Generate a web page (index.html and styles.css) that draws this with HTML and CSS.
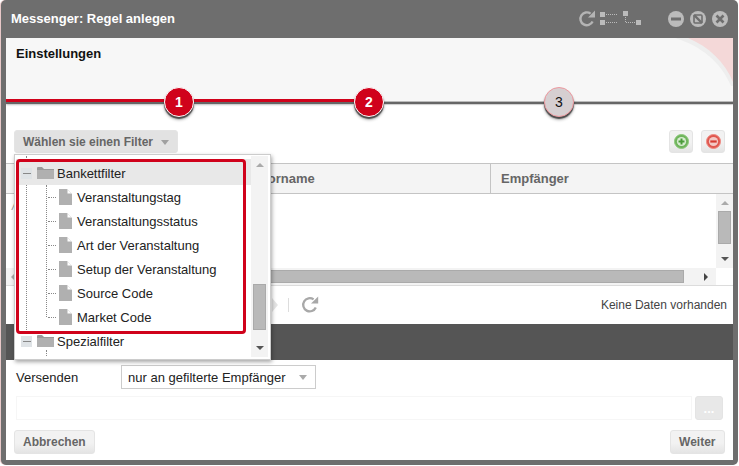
FILE: index.html
```html
<!DOCTYPE html>
<html lang="de">
<head>
<meta charset="utf-8">
<title>Messenger: Regel anlegen</title>
<link rel="stylesheet" href="styles.css">
</head>
<body>
<div class="window">
  <header class="titlebar">
    <span class="title">Messenger: Regel anlegen</span>
    <div class="tools">
      <svg class="ic-refresh" width="18" height="18" viewBox="0 0 18 18"><path d="M14.6 11.5A6.4 6.4 0 1 1 12.6 3.6" fill="none" stroke="#b4b4b4" stroke-width="2.4"/><path d="M10 7.4h7V.6z" fill="#b4b4b4"/></svg>
      <svg class="ic-tree" width="18" height="16" viewBox="0 0 18 16"><rect x="0" y="1" width="5" height="5" fill="#bbb"/><rect x="0" y="9" width="5" height="5" fill="#bbb"/><path d="M6 3.5h12M6 11.5h12" stroke="#bbb" stroke-dasharray="1 1"/></svg>
      <svg class="ic-tree2" width="18" height="16" viewBox="0 0 18 16"><rect x="0" y="0" width="5" height="5" fill="#bbb"/><rect x="13" y="9" width="5" height="5" fill="#bbb"/><path d="M2.5 6v6M3 11.5h10" stroke="#bbb" stroke-dasharray="1 1"/></svg>
    </div>
    <div class="winbtns">
      <svg width="16" height="16" viewBox="0 0 16 16"><circle cx="8" cy="8" r="8" fill="#bbb"/><rect x="3" y="6.5" width="10" height="3" fill="#6e6e6e"/></svg>
      <svg width="16" height="16" viewBox="0 0 16 16"><circle cx="8" cy="8" r="8" fill="#bbb"/><rect x="4" y="4" width="8" height="8" rx="1" fill="none" stroke="#6e6e6e" stroke-width="1.6"/><path d="M4 4l8 8" stroke="#6e6e6e" stroke-width="2.4"/></svg>
      <svg width="16" height="16" viewBox="0 0 16 16"><circle cx="8" cy="8" r="8" fill="#bbb"/><path d="M4.5 4.5l7 7M11.5 4.5l-7 7" stroke="#6e6e6e" stroke-width="2.6"/></svg>
    </div>
  </header>

  <main class="body">
    <section class="wizard">
      <h1 class="wizard-title">Einstellungen</h1>
      <div class="steps">
        <span class="seg seg-first seg-done"></span>
        <span class="step step-done">1</span>
        <span class="seg seg-mid seg-done"></span>
        <span class="step step-done">2</span>
        <span class="seg seg-mid seg-todo"></span>
        <span class="step step-todo">3</span>
        <span class="seg seg-last seg-todo"></span>
      </div>
    </section>

    <div class="toolbar">
      <button class="btn btn-filter" type="button">Wählen sie einen Filter<i class="caret"></i></button>
      <div class="toolbar-right">
        <button class="btn btn-icon" type="button"><svg width="15" height="15" viewBox="0 0 15 15"><circle cx="7.5" cy="7.5" r="7" fill="#6fb45c" stroke="#8cc87a"/><circle cx="7.5" cy="7.5" r="4.6" fill="#d8ecd2"/><path d="M7.5 4.5v6M4.5 7.5h6" stroke="#4b9b3a" stroke-width="2"/></svg></button>
        <button class="btn btn-icon" type="button"><svg width="15" height="15" viewBox="0 0 15 15"><circle cx="7.5" cy="7.5" r="7" fill="#e0584f" stroke="#ee8a82"/><circle cx="7.5" cy="7.5" r="4.6" fill="#f3c9c5"/><path d="M4.3 7.5h6.4" stroke="#d63c32" stroke-width="2.2"/></svg></button>
      </div>
    </div>

    <div class="grid">
      <div class="grid-head">
        <span class="col col-name">Vorname</span>
        <span class="col col-rcpt">Empfänger</span>
      </div>
      <div class="grid-main">
        <div class="grid-rows"><span class="grid-tick">/</span></div>
        <div class="vscroll">
          <i class="arrow arrow-up"></i>
          <i class="thumb vthumb"></i>
          <i class="arrow arrow-down"></i>
        </div>
      </div>
      <div class="hscroll">
        <div class="htrack">
          <i class="arrow arrow-left"></i>
          <i class="hthumb"></i>
          <i class="arrow arrow-right"></i>
        </div>
        <div class="hcorner"></div>
      </div>
      <div class="pager">
        <svg class="pager-next" width="8" height="16" viewBox="0 0 8 16"><path d="M1 1l6 7-6 7z" fill="#e4e4e4"/></svg>
        <i class="pager-sep"></i>
        <svg class="pager-refresh" width="18" height="18" viewBox="0 0 18 18"><path d="M14.8 11.5A6.6 6.6 0 1 1 12.6 3.4" fill="none" stroke="#a8a8a8" stroke-width="2.3"/><path d="M10 7.6h7.2V.6z" fill="#a8a8a8"/></svg>
        <span class="pager-info">Keine Daten vorhanden</span>
      </div>
    </div>

    <div class="band"></div>

    <div class="form-row">
      <label class="form-label">Versenden</label>
      <div class="select"><span>nur an gefilterte Empfänger</span><i class="caret caret-light"></i></div>
    </div>

    <div class="file-row">
      <div class="file-input"></div>
      <button class="btn-dots" type="button">...</button>
    </div>

    <footer class="actions">
      <button class="btn btn-action" type="button">Abbrechen</button>
      <button class="btn btn-action btn-next" type="button">Weiter</button>
    </footer>

    <svg class="corner" width="58" height="48" viewBox="0 0 58 48"><path d="M0 0C26 8 46 24 56 48H58V0z" fill="#eeeeee"/><path d="M13 0C34 9 50 24 58 44V0z" fill="#f4d8d8"/></svg>
  </main>

  <div class="popup">
    <div class="tree">
      <div class="tree-row tree-root tree-selected">
        <i class="expander"></i>
        <svg class="folder" width="17" height="12" viewBox="0 0 17 12"><path d="M0 3V1q0-1 1-1h4l2 2h10v1z" fill="#999"/><rect x="0" y="3" width="17" height="9" fill="#b0b0b0"/></svg>
        <span>Bankettfilter</span>
      </div>
      <div class="tree-children">
        <div class="tree-row tree-leaf"><i class="hdots"></i><svg class="file" width="13" height="16" viewBox="0 0 13 16"><path d="M0 0h8l5 5v11H0z" fill="#b0b0b0"/><path d="M8.5 0.5l4 4h-4z" fill="#fff"/></svg><span>Veranstaltungstag</span></div>
        <div class="tree-row tree-leaf"><i class="hdots"></i><svg class="file" width="13" height="16" viewBox="0 0 13 16"><path d="M0 0h8l5 5v11H0z" fill="#b0b0b0"/><path d="M8.5 0.5l4 4h-4z" fill="#fff"/></svg><span>Veranstaltungsstatus</span></div>
        <div class="tree-row tree-leaf"><i class="hdots"></i><svg class="file" width="13" height="16" viewBox="0 0 13 16"><path d="M0 0h8l5 5v11H0z" fill="#b0b0b0"/><path d="M8.5 0.5l4 4h-4z" fill="#fff"/></svg><span>Art der Veranstaltung</span></div>
        <div class="tree-row tree-leaf"><i class="hdots"></i><svg class="file" width="13" height="16" viewBox="0 0 13 16"><path d="M0 0h8l5 5v11H0z" fill="#b0b0b0"/><path d="M8.5 0.5l4 4h-4z" fill="#fff"/></svg><span>Setup der Veranstaltung</span></div>
        <div class="tree-row tree-leaf"><i class="hdots"></i><svg class="file" width="13" height="16" viewBox="0 0 13 16"><path d="M0 0h8l5 5v11H0z" fill="#b0b0b0"/><path d="M8.5 0.5l4 4h-4z" fill="#fff"/></svg><span>Source Code</span></div>
        <div class="tree-row tree-leaf"><i class="hdots"></i><svg class="file" width="13" height="16" viewBox="0 0 13 16"><path d="M0 0h8l5 5v11H0z" fill="#b0b0b0"/><path d="M8.5 0.5l4 4h-4z" fill="#fff"/></svg><span>Market Code</span></div>
      </div>
      <div class="tree-row tree-root">
        <i class="expander"></i>
        <svg class="folder" width="17" height="12" viewBox="0 0 17 12"><path d="M0 3V1q0-1 1-1h4l2 2h10v1z" fill="#999"/><rect x="0" y="3" width="17" height="9" fill="#b0b0b0"/></svg>
        <span>Spezialfilter</span>
      </div>
      <i class="tree-more"></i>
    </div>
    <div class="vscroll popup-scroll">
      <i class="arrow arrow-up"></i>
      <i class="thumb popup-thumb"></i>
      <i class="arrow arrow-down"></i>
    </div>
    <div class="highlight"></div>
  </div>
</div>
</body>
</html>
```

FILE: styles.css
```css
* { box-sizing: border-box; }
html, body { margin: 0; padding: 0; background: #fff; }
body {
  width: 739px;
  height: 466px;
  overflow: hidden;
  font-family: "Liberation Sans", Arial, sans-serif;
  font-size: 12px;
  color: #222;
}
button { font-family: inherit; padding: 0; margin: 0; cursor: default; }
i { display: block; }

.window {
  position: relative;
  width: 737px;
  height: 465px;
  margin-left: 1px;
  background: #6e6e6e;
  border-radius: 5px;
  padding: 0 5px 5px 5px;
  display: flex;
  flex-direction: column;
  box-shadow: -1px 0 0 #e8c8c8;
}

/* title bar */
.titlebar {
  height: 38px;
  flex: none;
  display: flex;
  align-items: center;
  padding-left: 5px;
}
.title { font-size: 13px; font-weight: bold; color: #fff; flex: 1; padding-bottom: 2px; }
.tools { display: flex; align-items: center; margin-right: 27px; }
.ic-refresh { margin-right: 4px; }
.ic-tree { margin-right: 5px; }
.ic-tree2 { margin-right: 0; }
.winbtns { display: flex; gap: 6px; margin-right: 5px; }

/* content */
.body {
  position: relative;
  flex: 1;
  background: #fff;
  display: flex;
  flex-direction: column;
  overflow: hidden;
}
.corner { position: absolute; top: 0; right: 0; }

.wizard {
  height: 80px;
  flex: none;
  background: linear-gradient(#f7f7f7 63px, #fff 63px);
  position: relative;
}
.wizard-title {
  margin: 0;
  padding: 8px 0 0 10px;
  font-size: 13px;
  line-height: 15px;
  font-weight: bold;
  color: #111;
}
.steps {
  position: absolute;
  left: 0;
  right: 0;
  top: 49px;
  display: flex;
  align-items: center;
  height: 30px;
}
.seg { display: block; position: relative; }
.seg-first { width: 158px; }
.seg-mid { width: 160px; }
.seg-last { flex: 1; }
.seg-done {
  height: 3px;
  top: -2px;
  background: #d0021b;
  box-shadow: 0 2px 0 #666, 0 3px 2px rgba(0,0,0,.25);
}
.seg-todo {
  height: 2px;
  top: 1px;
  background: #666;
  box-shadow: 0 -1px 0 #bbb, 0 1px 1px rgba(0,0,0,.2);
}
.step {
  width: 30px;
  height: 30px;
  flex: none;
  border-radius: 50%;
  display: flex;
  align-items: center;
  justify-content: center;
  position: relative;
  z-index: 1;
  font-size: 14px;
  box-shadow: 0 2px 1px rgba(0,0,0,.6), 0 3px 3px rgba(0,0,0,.3);
}
.step-done {
  background: #d0021b;
  border: 1px solid #fff;
  color: #fff;
  font-weight: bold;
}
.step-todo {
  background: #d6cfd1;
  border: 1px solid #ee9aa0;
  color: #111;
}

/* toolbar */
.toolbar {
  flex: none;
  display: flex;
  justify-content: space-between;
  padding: 12px 8px 0 8px;
  height: 45px;
}
.btn {
  height: 23px;
  border: 1px solid #e4e4e4;
  border-radius: 3px;
  background: linear-gradient(#f2f2f2, #f2f2f2 55%, #e4e4e4);
  font-size: 12px;
  font-weight: bold;
  color: #666;
}
.btn-filter {
  width: 164px;
  background: #e2e2e2;
  display: flex;
  align-items: center;
  padding-left: 8px;
}
.caret {
  width: 0;
  height: 0;
  margin-left: 8px;
  border-left: 4.5px solid transparent;
  border-right: 4.5px solid transparent;
  border-top: 5px solid #a0a0a0;
  margin-top: 1px;
}
.caret-light { border-top-color: #aaa; margin-left: 0; }
.toolbar-right { display: flex; gap: 8px; }
.btn-icon {
  width: 24px;
  display: flex;
  align-items: center;
  justify-content: center;
}

/* grid */
.grid { flex: none; }
.grid-head {
  height: 31px;
  background: #f4f4f4;
  border-top: 1px solid #c4c4c4;
  border-bottom: 1px solid #c4c4c4;
  display: flex;
  font-weight: bold;
  color: #666;
  font-size: 13px;
  line-height: 29px;
}
.col-name { width: 484px; padding-left: 254px; }
.col-rcpt { flex: 1; border-left: 1px solid #c4c4c4; padding-left: 10px; }
.grid-main { display: flex; height: 74px; }
.grid-rows { flex: 1; padding: 5px 0 0 6px; color: #999; line-height: 14px; font-style: italic; }
.grid-tick { display: block; }
.vscroll {
  width: 17px;
  flex: none;
  background: #f3f3f3;
  display: flex;
  flex-direction: column;
  align-items: center;
  position: relative;
}
.arrow { width: 0; height: 0; flex: none; }
.arrow-up {
  position: absolute; top: 7px;
  border-left: 4px solid transparent;
  border-right: 4px solid transparent;
  border-bottom: 4px solid #aaa;
}
.arrow-down {
  position: absolute; bottom: 7px;
  border-left: 4px solid transparent;
  border-right: 4px solid transparent;
  border-top: 4px solid #555;
}
.arrow-right {
  border-top: 4px solid transparent;
  border-bottom: 4px solid transparent;
  border-left: 4px solid #444;
  margin-left: 20px;
}
.arrow-left {
  border-top: 4px solid transparent;
  border-bottom: 4px solid transparent;
  border-right: 4px solid #aaa;
  margin-left: 5px;
  margin-right: 8px;
}
.thumb { width: 13px; background: #b9b9b9; border: 1px solid #aaa; }
.vthumb { height: 33px; margin-top: 17px; }
.hscroll { display: flex; height: 17px; }
.htrack {
  flex: 1;
  background: #f3f3f3;
  display: flex;
  align-items: center;
  padding-right: 8px;
}
.hthumb { flex: 1; height: 13px; background: #b9b9b9; border: 1px solid #aaa; }
.hcorner { width: 17px; background: #fff; }
.pager {
  height: 39px;
  border-top: 1px solid #dcdcdc;
  display: flex;
  align-items: center;
  padding-left: 265px;
  padding-right: 6px;
}
.pager-next { margin-right: 9px; }
.pager-sep { width: 1px; height: 14px; background: #ddd; margin-right: 12px; }
.pager-info { margin-left: auto; color: #444; font-size: 12px; }

.band { flex: none; height: 36px; background: #555; }

/* form */
.form-row {
  flex: none;
  display: flex;
  align-items: center;
  height: 36px;
  padding: 5px 0 7px 10px;
}
.form-label { width: 105px; font-size: 13px; color: #222; }
.select {
  width: 195px;
  height: 24px;
  border: 1px solid #ccc;
  display: flex;
  align-items: center;
  justify-content: space-between;
  padding: 0 8px 0 6px;
  font-size: 13px;
  color: #222;
}
.file-row {
  flex: none;
  display: flex;
  gap: 3px;
  height: 24px;
  padding-left: 10px;
}
.file-input { width: 676px; height: 24px; border: 1px solid #f6f6f6; }
.btn-dots {
  width: 28px;
  height: 24px;
  background: #e8e8e8;
  border: 1px solid #e4e4e4;
  border-radius: 3px;
  color: #fff;
  font-weight: bold;
  font-size: 13px;
}
.actions {
  flex: none;
  display: flex;
  justify-content: space-between;
  padding: 10px 8px 0 8px;
}
.btn-action { height: 24px; padding: 0 8px; }
.btn-next { padding: 0 8.5px; }

/* dropdown popup */
.popup {
  position: absolute;
  left: 13px;
  top: 154px;
  width: 257px;
  height: 206px;
  background: #fff;
  border: 1px solid #ccc;
  box-shadow: 1px 2px 4px rgba(0,0,0,.35);
  display: flex;
  padding: 1px 2px 2px 1px;
}
.tree { flex: 1; position: relative; padding-top: 3px; font-size: 13px; color: #222; }
.tree::before {
  content: "";
  position: absolute;
  left: 10px;
  top: 0;
  height: 178px;
  border-left: 1px dotted #888;
}
.tree-row { height: 24px; display: flex; align-items: center; position: relative; }
.tree-root { padding-left: 5px; }
.tree-selected { background: #e8e8e8; height: 26px; padding-top: 2px; }
.expander {
  width: 11px;
  height: 11px;
  background: #dfe3e6;
  position: relative;
  z-index: 1;
}
.expander::after {
  content: "";
  position: absolute;
  left: 2px;
  top: 5px;
  width: 8px;
  height: 1px;
  background: #888;
}
.folder { margin-left: 5px; margin-right: 3px; }
.tree-children { position: relative; padding-left: 31px; }
.tree-children::before {
  content: "";
  position: absolute;
  left: 30px;
  top: 0;
  height: 132px;
  border-left: 1px dotted #888;
}
.tree-leaf { padding-left: 1px; }
.hdots { width: 8px; border-top: 1px dotted #888; }
.file { margin-left: 3px; margin-right: 5px; }
.tree-more {
  position: absolute;
  left: 30px;
  top: 194px;
  height: 6px;
  border-left: 1px dotted #888;
}
.popup-scroll { height: 100%; }
.popup-thumb { height: 46px; margin-top: 128px; }
.highlight {
  position: absolute;
  left: 1px;
  top: 4px;
  width: 230px;
  height: 175px;
  border: 3px solid #d0021b;
  border-radius: 4px;
}
```
